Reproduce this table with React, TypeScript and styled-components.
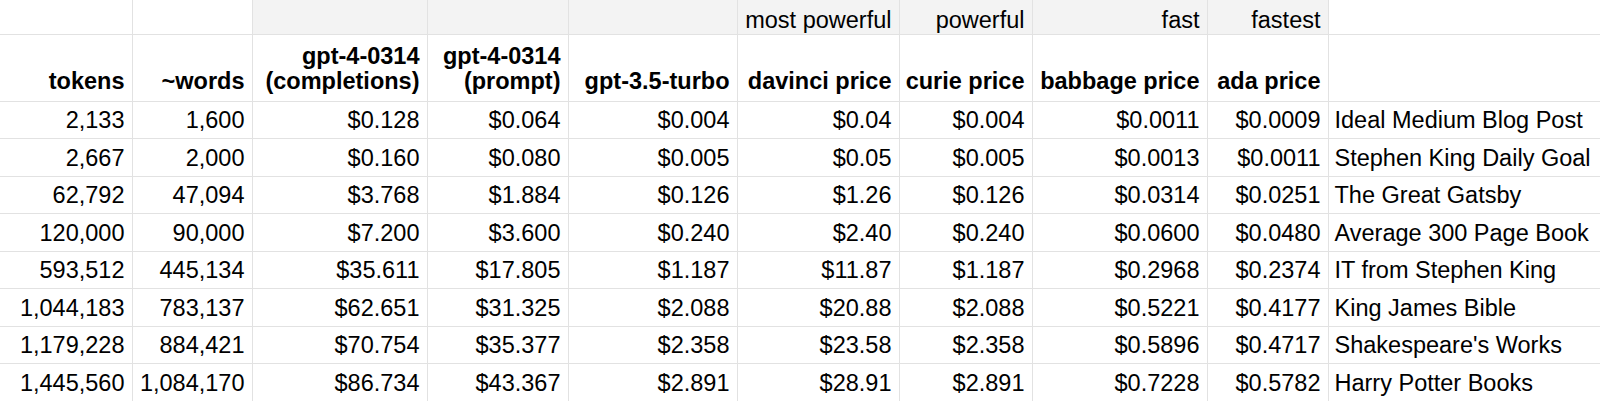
import React from 'react';
import styled, { createGlobalStyle } from 'styled-components';

const GlobalStyle = createGlobalStyle`
    html, body {
        margin: 0;
        padding: 0;
        background: #ffffff;
        overflow: hidden;
    }
    body {
        font-family: "Liberation Sans", Arial, sans-serif;
        color: #000000;
    }
`;

const Sheet = styled.table`
    border-collapse: collapse;
    table-layout: fixed;
    width: 1602px;
    font-size: 23.5px;
    line-height: 25px;
`;

const Row = styled.tr<{ $h: number }>`
    height: ${p => p.$h}px;
`;

const Cell = styled.td<{ $shaded?: boolean; $bold?: boolean; $left?: boolean; $pb: number }>`
    border: 1px solid #e2e2e2;
    padding: 0 7px ${p => p.$pb}px 6px;
    vertical-align: bottom;
    white-space: nowrap;
    overflow: hidden;
    text-align: ${p => (p.$left ? 'left' : 'right')};
    font-weight: ${p => (p.$bold ? 700 : 400)};
    background: ${p => (p.$shaded ? '#f3f3f3' : '#ffffff')};
    &:first-child {
        border-left: none;
    }
`;

const TopRow = styled(Row)`
    & > td {
        border-top: none;
    }
`;

const widths = [132, 120, 175, 141, 169, 162, 133, 175, 121, 274];

const topRow = ['', '', '', '', '', 'most powerful', 'powerful', 'fast', 'fastest', ''];

const headers: string[][] = [
    ['tokens'],
    ['~words'],
    ['gpt-4-0314', '(completions)'],
    ['gpt-4-0314', '(prompt)'],
    ['gpt-3.5-turbo'],
    ['davinci price'],
    ['curie price'],
    ['babbage price'],
    ['ada price'],
    [''],
];

const rows = [
    ['2,133', '1,600', '$0.128', '$0.064', '$0.004', '$0.04', '$0.004', '$0.0011', '$0.0009', 'Ideal Medium Blog Post'],
    ['2,667', '2,000', '$0.160', '$0.080', '$0.005', '$0.05', '$0.005', '$0.0013', '$0.0011', 'Stephen King Daily Goal'],
    ['62,792', '47,094', '$3.768', '$1.884', '$0.126', '$1.26', '$0.126', '$0.0314', '$0.0251', 'The Great Gatsby'],
    ['120,000', '90,000', '$7.200', '$3.600', '$0.240', '$2.40', '$0.240', '$0.0600', '$0.0480', 'Average 300 Page Book'],
    ['593,512', '445,134', '$35.611', '$17.805', '$1.187', '$11.87', '$1.187', '$0.2968', '$0.2374', 'IT from Stephen King'],
    ['1,044,183', '783,137', '$62.651', '$31.325', '$2.088', '$20.88', '$2.088', '$0.5221', '$0.4177', 'King James Bible'],
    ['1,179,228', '884,421', '$70.754', '$35.377', '$2.358', '$23.58', '$2.358', '$0.5896', '$0.4717', "Shakespeare's Works"],
    ['1,445,560', '1,084,170', '$86.734', '$43.367', '$2.891', '$28.91', '$2.891', '$0.7228', '$0.5782', 'Harry Potter Books'],
];

const lastCol = widths.length - 1;

export default function App() {
    return (
        <>
            <GlobalStyle />
            <Sheet>
                <colgroup>
                    {widths.map((w, i) => (
                        <col key={i} style={{ width: w }} />
                    ))}
                </colgroup>
                <tbody>
                    <TopRow $h={34}>
                        {topRow.map((t, i) => (
                            <Cell key={i} $pb={1} $shaded={i >= 2 && i <= 8}>
                                {t}
                            </Cell>
                        ))}
                    </TopRow>
                    <Row $h={67}>
                        {headers.map((lines, i) => (
                            <Cell key={i} $pb={7} $bold>
                                {lines.map((l, j) => (
                                    <div key={j}>{l}</div>
                                ))}
                            </Cell>
                        ))}
                    </Row>
                    {rows.map((r, ri) => (
                        <Row key={ri} $h={37.5}>
                            {r.map((v, i) => (
                                <Cell key={i} $pb={5} $left={i === lastCol}>
                                    {v}
                                </Cell>
                            ))}
                        </Row>
                    ))}
                </tbody>
            </Sheet>
        </>
    );
}
